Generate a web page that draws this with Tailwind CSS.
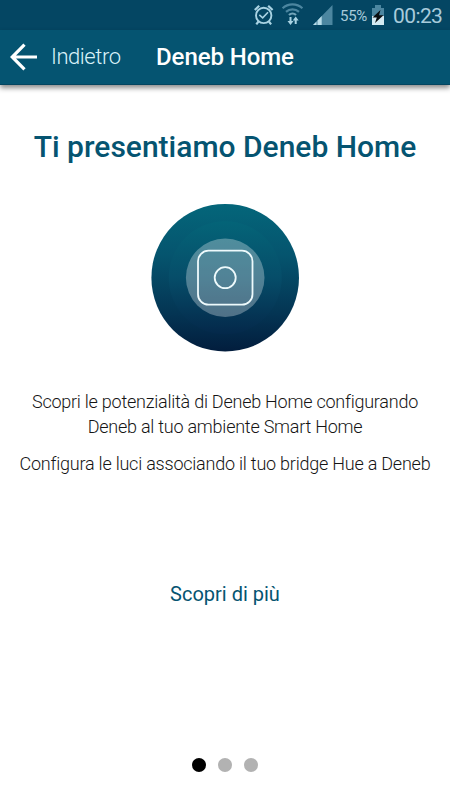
<!DOCTYPE html>
<html lang="it">
<head>
<meta charset="utf-8">
<title>Deneb Home</title>
<script src="https://cdn.jsdelivr.net/npm/@tailwindcss/browser@4"></script>
</head>
<body class="bg-white font-['Roboto',sans-serif]">
<div class="flex flex-col w-[450px] h-[800px] overflow-hidden bg-white">
  <div class="flex items-center h-[30px] shrink-0 bg-[#044663] text-[#a9cbdb] whitespace-nowrap">
    <svg class="w-[340px] h-[30px] shrink-0" viewBox="0 0 340 30" fill="none">
      <!-- alarm -->
      <g stroke="#a9d3e3" stroke-width="1.9">
        <circle cx="263.7" cy="15.400" r="7.700"/>
        <path d="M259.300 14.800l3.400 3 5.300-5.600" stroke-width="1.6"/>
        <path d="M254.800 10l4.400-4.200M272.600 10l-4.400-4.200M258.500 21.500l-2.200 2.900M268.900 21.500l2.200 2.900" stroke-width="2.200"/>
      </g>
      <!-- wifi -->
      <g stroke="#4c86a0" stroke-width="2.2">
        <path d="M282.6 8.2a14.5 14.5 0 0 1 19.8 0"/>
        <path d="M286 11.9a9.6 9.6 0 0 1 13 0"/>
        <path d="M289 15a5 5 0 0 1 7 0" stroke="#73a5ba"/>
      </g>
      <path d="M290.5 17v5M295.7 24v-5" stroke="#a9d3e3" stroke-width="2"/>
      <path d="M287.5 21h6l-3 4zM292.7 20.500h6l-3-4z" fill="#a9d3e3"/>
      <!-- signal -->
      <path d="M313 25L332.500 5v20z" fill="#4c86a0"/>
      <path d="M313 25l3.500-3.600v3.600zM317.500 25v-4.600l4.200-4.300v8.900z" fill="#b8dce8"/>
    </svg>
    <span class="w-[32px] text-[15px] leading-[30px] tracking-[-0.300px] pt-[2px]">55%</span>
    <svg class="w-[20px] h-[30px] shrink-0" viewBox="372 0 20 30">
      <rect x="375" y="5" width="6" height="3" fill="#4c86a0"/>
      <rect x="372" y="8" width="12" height="17" fill="#4c86a0"/>
      <rect x="372" y="16" width="12" height="9" fill="#d5eaf2"/>
      <path d="M380.500 10l-8 7.500h4.300l-1.800 5.500 8.500-7.800h-4.500z" fill="#0a0d10"/>
    </svg>
    <span class="ml-px text-[21px] leading-[30px] tracking-[-0.600px] pt-px">00:23</span>
  </div>
  <header class="flex items-center h-[55px] shrink-0 bg-[#055471] text-white whitespace-nowrap border-b border-[#044560] shadow-[0_3px_5px_rgba(0,0,0,0.45)]">
    <svg class="ml-[10px] w-[28px] h-[28px] shrink-0" viewBox="0 0 28 28" fill="none" stroke="#fff" stroke-width="3.200"><path d="M27 14H3M14.500 1.700L2.200 14l12.300 12.300"/></svg>
    <span class="ml-[13px] w-[105px] pb-[2px] text-[22px] tracking-[-0.450px] font-light text-[#d9f2f9]">Indietro</span>
    <span class="text-[24px] tracking-[-0.070px] font-medium">Deneb Home</span>
  </header>
  <main class="flex flex-col items-center text-center whitespace-nowrap">
    <h1 class="mt-[42px] text-[30px] leading-[40px] font-medium text-[#055471]">Ti presentiamo Deneb Home</h1>
    <svg class="mt-[36px] w-[150px] h-[150px]" viewBox="0 0 150 150">
      <defs>
        <linearGradient id="a" x1="0" y1="0" x2="0" y2="1"><stop offset="0" stop-color="#04667a"/><stop offset=".35" stop-color="#05546e"/><stop offset=".75" stop-color="#043453"/><stop offset="1" stop-color="#021d3d"/></linearGradient>
        <linearGradient id="b" x1="0" y1="0" x2="0" y2="1"><stop offset="0" stop-color="#046478"/><stop offset=".5" stop-color="#064d69"/><stop offset="1" stop-color="#04284a"/></linearGradient>
      </defs>
      <circle cx="75.200" cy="74.700" r="73.800" fill="url(#a)"/>
      <circle cx="75.200" cy="74.700" r="56.500" fill="url(#b)"/>
      <circle cx="75.200" cy="74.700" r="39.300" fill="#fff" fill-opacity=".3"/>
      <g fill="none" stroke="#eefafc" stroke-width="1.800"><rect x="48" y="47.700" width="54.500" height="54" rx="10.500"/><circle cx="75.200" cy="74.700" r="10.500"/></g>
    </svg>
    <p class="mt-[36px] text-[18px] leading-[25px] tracking-[-0.240px] font-light text-[#151515]">Scopri le potenzialità di Deneb Home configurando<br>Deneb al tuo ambiente Smart Home</p>
    <p class="mt-[12px] text-[18px] leading-[25px] tracking-[-0.225px] font-light text-[#151515]">Configura le luci associando il tuo bridge Hue a Deneb</p>
    <a class="mt-[103px] text-[20px] leading-[30px] text-[#055471]">Scopri di più</a>
    <div class="mt-[149px] flex gap-[12px]">
      <span class="size-[14px] rounded-full bg-black"></span>
      <span class="size-[14px] rounded-full bg-[#b2b2b2]"></span>
      <span class="size-[14px] rounded-full bg-[#b2b2b2]"></span>
    </div>
  </main>
</div>
</body>
</html>
